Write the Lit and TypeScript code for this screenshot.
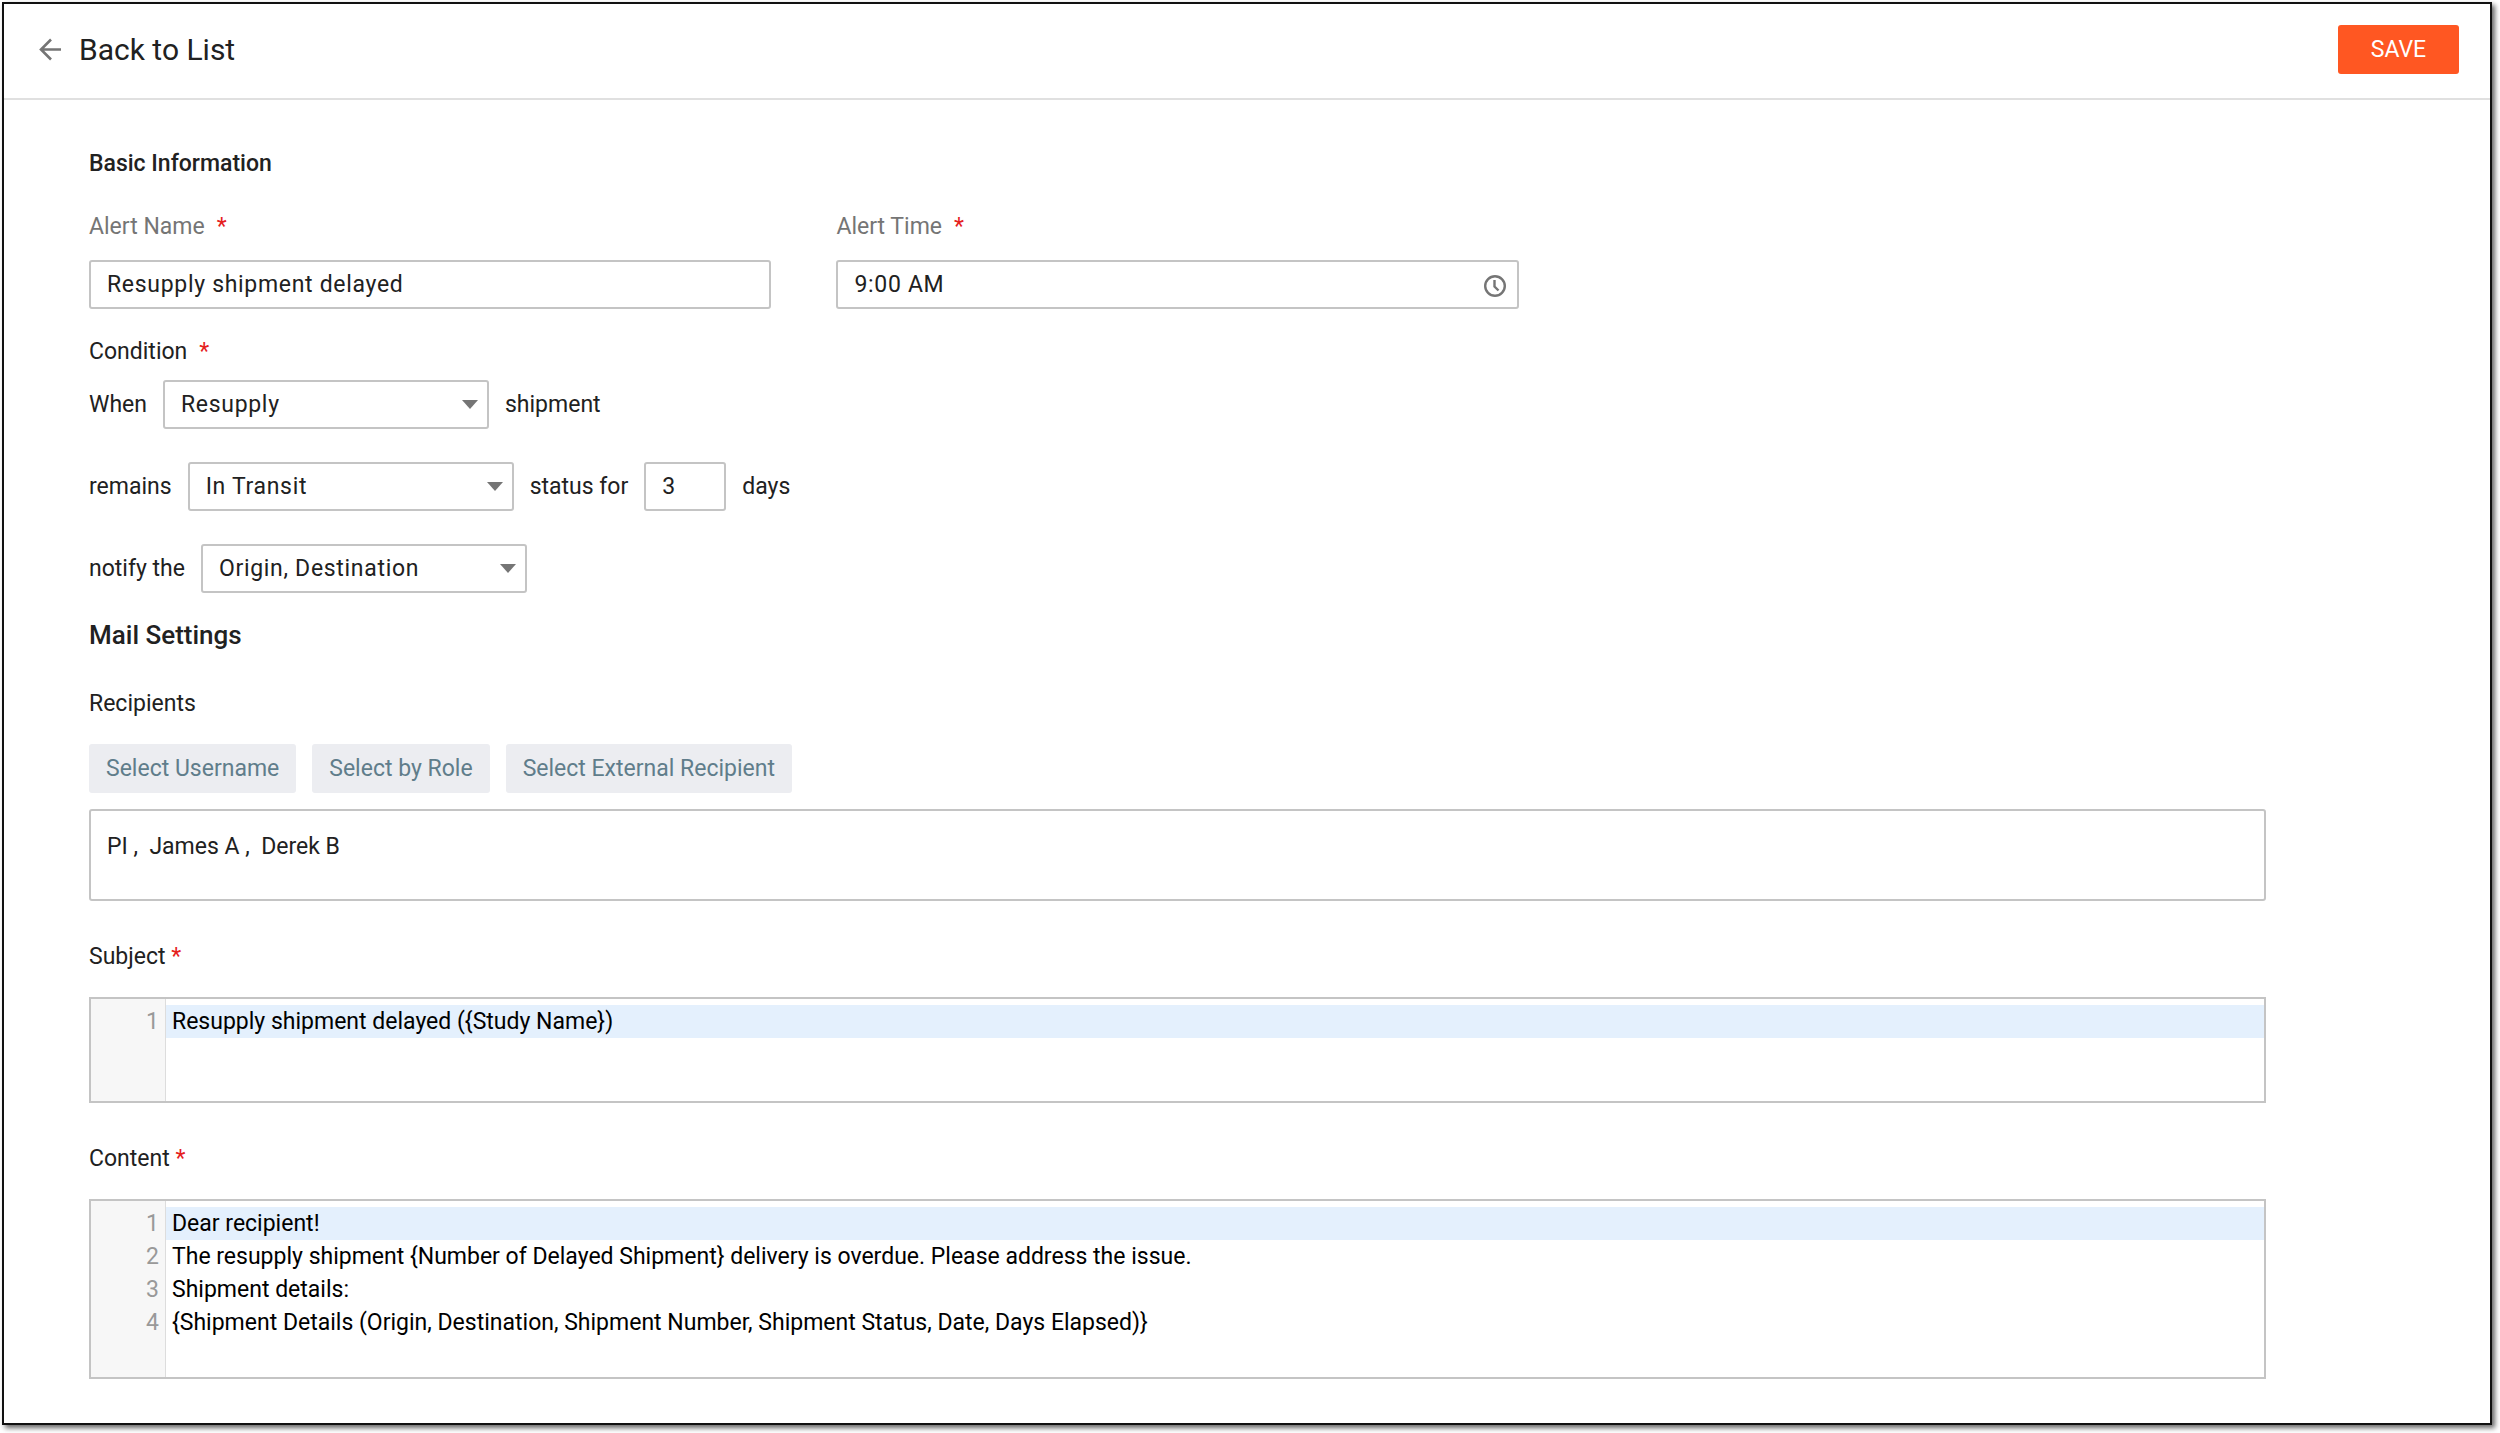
import { LitElement, html, css } from "lit";
import { customElement, property } from "lit/decorators.js";

const controls = css`
  *,
  *::before,
  *::after {
    box-sizing: border-box;
  }
  input,
  select,
  textarea,
  button {
    margin: 0;
    font: inherit;
    color: inherit;
  }
  .required {
    color: #e5201d;
  }
`;

@customElement("code-editor")
export class CodeEditor extends LitElement {
  @property() label = "";
  @property() value = "";

  static styles = [
    controls,
    css`
      :host {
        display: block;
      }
      .label {
        display: block;
        line-height: 28px;
        margin-bottom: 26px;
      }
      .editor {
        display: flex;
        min-height: var(--editor-height, 106px);
        border: 2px solid #c4c4c4;
        line-height: 33px;
      }
      .gutter {
        flex: none;
        width: 75px;
        margin: 0;
        padding: 6px 6px 0 0;
        border-right: 1px solid #dddddd;
        background: #f7f7f7;
        color: #999999;
        text-align: right;
        list-style: none;
      }
      .code {
        flex: 1;
        min-width: 0;
        display: block;
        padding: 6px 6px 0;
        border: 0;
        outline: 0;
        resize: none;
        overflow: hidden;
        color: #000000;
        background: linear-gradient(#e4f0fd, #e4f0fd) 0 6px / 100% 33px no-repeat;
      }
    `,
  ];

  render() {
    const lines = this.value.split("\n");
    return html`
      <label class="label" for="code">${this.label} <span class="required">*</span></label>
      <div class="editor">
        <ol class="gutter">
          ${lines.map((_, i) => html`<li>${i + 1}</li>`)}
        </ol>
        <textarea class="code" id="code" rows=${lines.length} spellcheck="false" .value=${this.value}></textarea>
      </div>
    `;
  }
}

@customElement("app-root")
export class AppRoot extends LitElement {
  static styles = [
    controls,
    css`
      :host {
        display: block;
        min-height: 100vh;
        padding: 2px 8px 8px 2px;
        background: #ffffff;
        color: #212121;
        font: 400 23px/28px Roboto, "Liberation Sans", sans-serif;
        box-sizing: border-box;
      }
      .frame {
        border: 2px solid #111111;
        background: #ffffff;
        box-shadow: 3px 3px 5px rgba(0, 0, 0, 0.6);
      }
      .header {
        display: flex;
        align-items: center;
        justify-content: space-between;
        height: 96px;
        padding: 0 31px 3px 34px;
        border-bottom: 2px solid #e0e0e0;
      }
      .back {
        display: flex;
        align-items: center;
        gap: 16px;
        color: inherit;
        font-size: 30px;
        line-height: 34px;
        text-decoration: none;
      }
      .back-icon {
        width: 25px;
        height: 25px;
        fill: none;
        stroke: #757575;
        stroke-width: 2.6;
      }
      .save {
        width: 121px;
        height: 49px;
        padding: 0;
        border: 0;
        border-radius: 3px;
        background: #ff5722;
        color: #ffffff;
      }
      .form {
        width: 91%;
        padding: 50px 0 44px 85px;
      }
      .section {
        margin: 0;
        font-size: 23px;
        font-weight: 500;
        line-height: 28px;
      }
      .section.large {
        font-size: 26px;
        line-height: 34px;
        margin: 25px 0 38px;
      }
      .fields {
        display: grid;
        grid-template-columns: repeat(3, 1fr);
        gap: 65px;
        margin: 35px 0 29px;
      }
      .field-label {
        display: flex;
        gap: 12px;
        margin-bottom: 19px;
        color: #757575;
      }
      .legend {
        display: flex;
        gap: 12px;
      }
      .control {
        display: flex;
        align-items: center;
        width: 100%;
        height: 49px;
        padding: 0 16px;
        border: 2px solid #c4c4c4;
        border-radius: 3px;
        background: #ffffff;
        letter-spacing: 0.03em;
      }
      .time {
        padding: 0 10px 0 0;
      }
      .time-input {
        flex: 1;
        min-width: 0;
        height: 100%;
        padding: 0 16px;
        border: 0;
        outline: 0;
        background: none;
        letter-spacing: inherit;
      }
      .clock {
        display: flex;
        padding: 2px 0 0;
        border: 0;
        background: none;
      }
      .clock-icon {
        width: 24px;
        height: 24px;
        fill: none;
        stroke: #757575;
        stroke-width: 2.4;
      }
      .conditions {
        display: grid;
        gap: 33px;
        margin-top: 14px;
      }
      .condition {
        display: flex;
        align-items: center;
        gap: 16px;
      }
      .select {
        display: grid;
        align-items: center;
        width: 326px;
      }
      .select > * {
        grid-area: 1 / 1;
      }
      .select .control {
        appearance: none;
      }
      .caret {
        justify-self: end;
        margin-right: 11px;
        border: solid transparent;
        border-width: 9px 8px 0;
        border-top-color: #757575;
        pointer-events: none;
      }
      .control.days {
        width: 82px;
      }
      .actions {
        display: flex;
        gap: 16px;
        margin: 26px 0 16px;
      }
      .action {
        height: 49px;
        padding: 0 17px;
        border: 0;
        border-radius: 3px;
        background: #ecedf1;
        color: #607d8b;
      }
      .recipients {
        display: block;
        width: 100%;
        height: 92px;
        padding: 22px 16px;
        border: 2px solid #c4c4c4;
        border-radius: 3px;
        resize: none;
        overflow: hidden;
        margin-bottom: 42px;
      }
      .subject {
        margin-bottom: 42px;
      }
      .content {
        --editor-height: 180px;
      }
    `,
  ];

  private select(id: string, name: string, value: string) {
    return html`
      <span class="select">
        <select class="control" id=${id} aria-label=${name}>
          <option>${value}</option>
        </select>
        <span class="caret"></span>
      </span>
    `;
  }

  render() {
    const content = [
      "Dear recipient!",
      "The resupply shipment {Number of Delayed Shipment} delivery is overdue. Please address the issue.",
      "Shipment details:",
      "{Shipment Details (Origin, Destination, Shipment Number, Shipment Status, Date, Days Elapsed)}",
    ].join("\n");

    return html`
      <div class="frame">
        <header class="header">
          <a class="back" href="#list">
            <svg class="back-icon" viewBox="0 0 25 25" aria-hidden="true">
              <path d="M23 12.5H3.5M13 2.5L3 12.5L13 22.5" />
            </svg>
            Back to List
          </a>
          <button class="save" type="button">SAVE</button>
        </header>

        <form class="form">
          <h2 class="section">Basic Information</h2>
          <div class="fields">
            <div>
              <label class="field-label" for="name">Alert Name <span class="required">*</span></label>
              <input class="control" id="name" type="text" value="Resupply shipment delayed" />
            </div>
            <div>
              <label class="field-label" for="time">Alert Time <span class="required">*</span></label>
              <div class="control time">
                <input class="time-input" id="time" type="text" value="9:00 AM" />
                <button class="clock" type="button" aria-label="Choose time">
                  <svg class="clock-icon" viewBox="0 0 24 24" aria-hidden="true">
                    <circle cx="12" cy="12" r="9.8" />
                    <path d="M11.5 6V12.5L15.5 16.5" />
                  </svg>
                </button>
              </div>
            </div>
          </div>

          <div class="legend">Condition <span class="required">*</span></div>
          <div class="conditions">
            <div class="condition">
              <label for="type">When</label>
              ${this.select("type", "When", "Resupply")}
              <span>shipment</span>
            </div>
            <div class="condition">
              <label for="status">remains</label>
              ${this.select("status", "remains", "In Transit")}
              <label for="days">status for</label>
              <input class="control days" id="days" type="text" inputmode="numeric" value="3" />
              <span>days</span>
            </div>
            <div class="condition">
              <label for="notify">notify the</label>
              ${this.select("notify", "notify the", "Origin, Destination")}
            </div>
          </div>

          <h2 class="section large">Mail Settings</h2>
          <label for="recipients">Recipients</label>
          <div class="actions">
            <button class="action" type="button">Select Username</button>
            <button class="action" type="button">Select by Role</button>
            <button class="action" type="button">Select External Recipient</button>
          </div>
          <textarea class="recipients" id="recipients" spellcheck="false" .value=${"PI ,  James A ,  Derek B"}></textarea>

          <code-editor class="subject" label="Subject" .value=${"Resupply shipment delayed ({Study Name})"}></code-editor>
          <code-editor class="content" label="Content" .value=${content}></code-editor>
        </form>
      </div>
    `;
  }
}
